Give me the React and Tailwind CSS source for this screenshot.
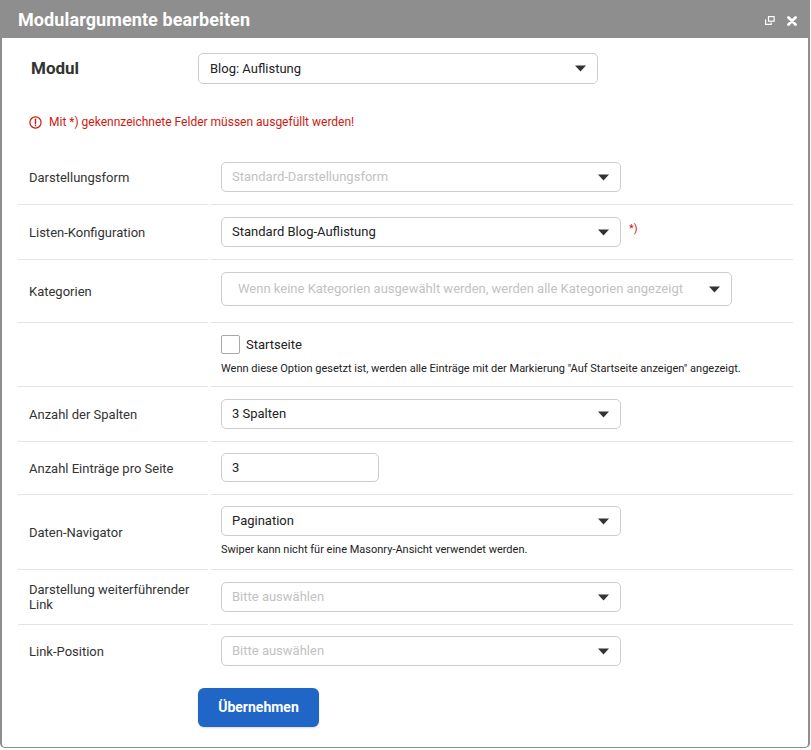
import React from 'react';

const font = { fontFamily: 'Roboto, "Liberation Sans", sans-serif' };

const Arrow = () => (
  <svg width="11" height="7" viewBox="0 0 11 7" className="shrink-0">
    <path d="M0 0.5 H11 L5.5 6.5 Z" fill="#333" />
  </svg>
);

const Select = ({ value, placeholder, width = 'w-[400px]', height = 'h-[30px]', padLeft = 'pl-[10px]' }) => (
  <div
    className={`${width} ${height} ${padLeft} pr-[11px] flex items-center justify-between border border-[#cdcdcd] rounded-[5px] bg-white text-[13px]`}
  >
    {value ? (
      <span className="text-[#222]">{value}</span>
    ) : (
      <span className="text-[#c2c2c2]">{placeholder}</span>
    )}
    <Arrow />
  </div>
);

const Row = ({ label, children, className = 'py-3', last }) => (
  <>
    <div className={`flex items-center pl-[11px] pr-3 text-[13px] leading-[15px] text-[#333] ${last ? '' : 'border-b border-[#e3e3e3]'}`}>
      {label}
    </div>
    <div className={`pl-[10px] ${className} ${last ? '' : 'border-b border-[#e3e3e3]'}`}>
      {children}
    </div>
  </>
);

const ErrorIcon = () => (
  <svg width="13" height="13" viewBox="0 0 13 13" className="shrink-0">
    <circle cx="6.5" cy="6.5" r="5.6" fill="none" stroke="#cc1a10" strokeWidth="1.2" />
    <path d="M6.5 3.3 V7.4" stroke="#cc1a10" strokeWidth="1.4" strokeLinecap="round" />
    <circle cx="6.5" cy="9.4" r="0.8" fill="#cc1a10" />
  </svg>
);

export default function App() {
  return (
    <div className="w-[811px] h-[750px] bg-white" style={font}>
      <div className="w-[810px] h-[748px] border-x-2 border-b border-[#8e8e8e] rounded-b-[5px] flex flex-col">
        {/* header */}
        <div className="h-[38px] bg-[#8e8e8e] flex items-center pl-[16px] pr-[11px] shrink-0">
          <h1 className="text-white font-bold text-[18px] tracking-[0.1px]">Modulargumente bearbeiten</h1>
          <div className="ml-auto flex items-center gap-[12px] pt-[3px]">
            <svg width="10" height="9" viewBox="0 0 10 9">
              <rect x="3.5" y="0.6" width="5.6" height="4.6" fill="none" stroke="#fff" strokeWidth="1.2" />
              <path d="M0.6 3.2 V8.4 H6.2 V6.4" fill="none" stroke="#fff" strokeWidth="1.2" />
            </svg>
            <svg width="10" height="10" viewBox="0 0 10 10">
              <path d="M1.5 1.5 L8.5 8.5 M8.5 1.5 L1.5 8.5" stroke="#fff" strokeWidth="2.8" strokeLinecap="round" />
            </svg>
          </div>
        </div>

        {/* body */}
        <div className="px-[16px] pt-[15px]">
          <div className="flex items-center">
            <div className="w-[180px] pl-[13px] text-[17px] font-bold text-[#333]">Modul</div>
            <Select value="Blog: Auflistung" height="h-[31px]" padLeft="pl-[11px]" />
          </div>

          <div className="flex items-center gap-[7px] pl-[11px] mt-[30px] h-[16px]">
            <ErrorIcon />
            <span className="text-[12px] text-[#cc1a10]">Mit *) gekennzeichnete Felder müssen ausgefüllt werden!</span>
          </div>

          <div className="grid grid-cols-[190px_1fr] gap-x-[3px] mt-[20px] w-[775px]">
            <Row label="Darstellungsform">
              <Select placeholder="Standard-Darstellungsform" />
            </Row>
            <Row label="Listen-Konfiguration">
              <div className="flex items-start gap-[8px]">
                <Select value="Standard Blog-Auflistung" />
                <span className="text-[11px] text-[#cc1a10] leading-[11px] pt-[6px]">*)</span>
              </div>
            </Row>
            <Row label="Kategorien" className="pt-3 pb-4">
              <Select
                placeholder="Wenn keine Kategorien ausgewählt werden, werden alle Kategorien angezeigt"
                width="w-[511px]"
                height="h-[34px]"
                padLeft="pl-[16px]"
              />
            </Row>
            <Row label="" className="pt-3 pb-[10px]">
              <label className="flex items-center gap-[6px] h-[19px]">
                <span className="w-[19px] h-[19px] border border-[#a8a8a8] rounded-[2px] bg-white" />
                <span className="text-[13px] text-[#222]">Startseite</span>
              </label>
              <p className="mt-[7px] text-[11px] leading-[15px] text-[#222]">
                Wenn diese Option gesetzt ist, werden alle Einträge mit der Markierung "Auf Startseite anzeigen" angezeigt.
              </p>
            </Row>
            <Row label="Anzahl der Spalten">
              <Select value="3 Spalten" />
            </Row>
            <Row label="Anzahl Einträge pro Seite" className="pt-[11px] pb-[12px]">
              <div className="w-[158px] h-[29px] border border-[#cdcdcd] rounded-[5px] pl-[10px] flex items-center text-[13px] text-[#222]">
                3
              </div>
            </Row>
            <Row label="Daten-Navigator" className="pt-[11px] pb-[12px]">
              <Select value="Pagination" />
              <p className="mt-[7px] text-[11px] leading-[14px] text-[#222]">
                Swiper kann nicht für eine Masonry-Ansicht verwendet werden.
              </p>
            </Row>
            <Row label={<span>Darstellung weiterführender<br />Link</span>}>
              <Select placeholder="Bitte auswählen" />
            </Row>
            <Row label="Link-Position" last className="pt-[11px] pb-[11px]">
              <Select placeholder="Bitte auswählen" />
            </Row>
          </div>

          <button className="ml-[180px] mt-[11px] w-[121px] h-[39px] rounded-[6px] bg-[#1f66c6] text-white font-bold text-[14px] shadow-[0_1px_2px_rgba(0,0,0,0.15)]">
            Übernehmen
          </button>
        </div>
      </div>
    </div>
  );
}
